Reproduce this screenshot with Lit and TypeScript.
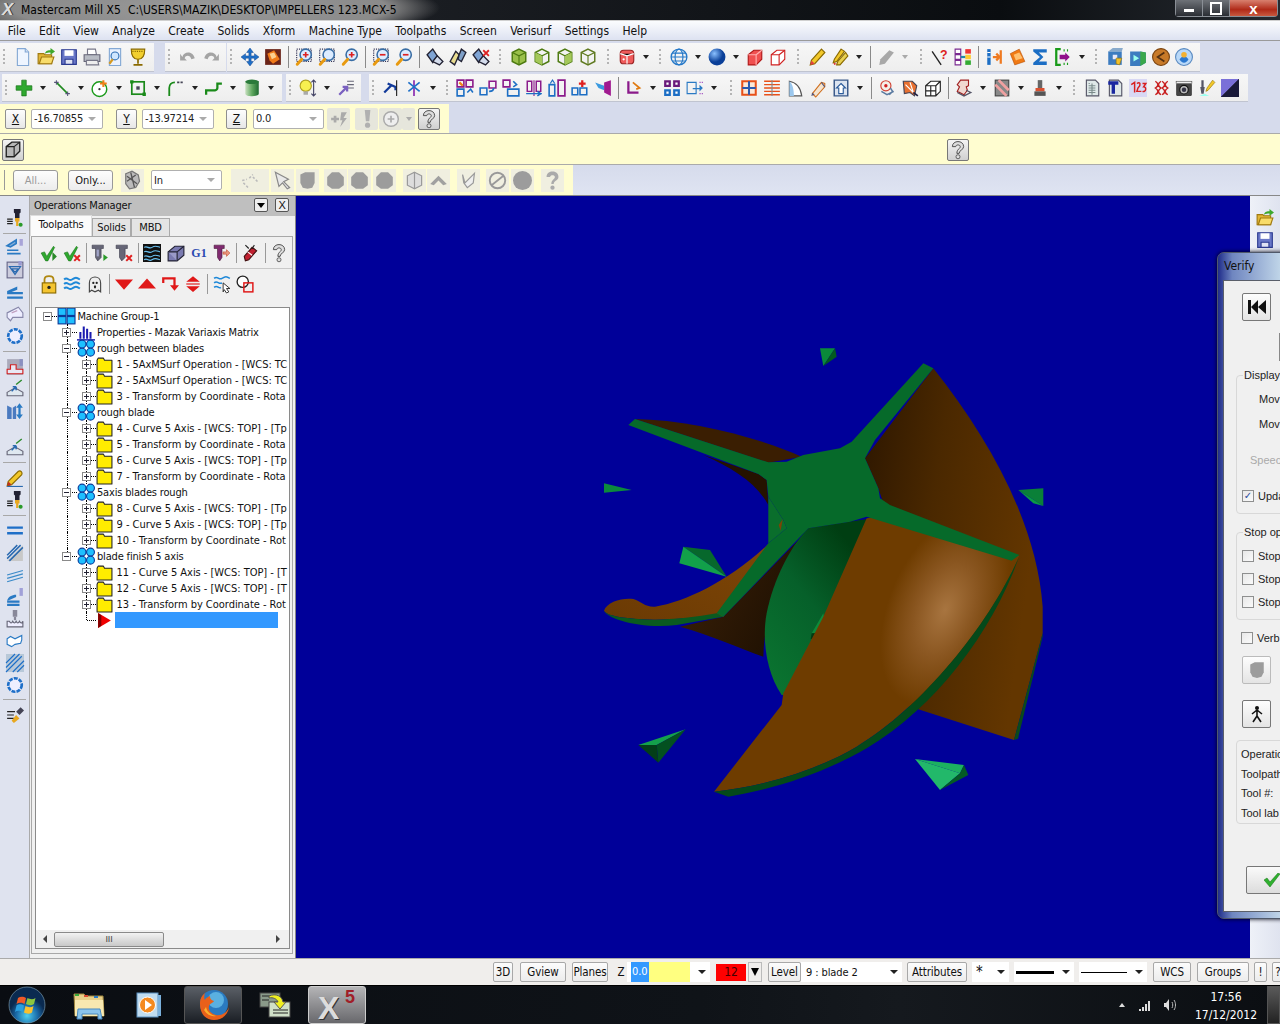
import { LitElement, html, css, svg } from "lit";
import { customElement } from "lit/decorators.js";
import { unsafeSVG } from "lit/directives/unsafe-svg.js";

const mag = (c: string, inner = "") => `<circle cx="9.5" cy="6" r="5" fill="#dcecff" stroke="#3a6ea5" stroke-width="1.4"/>${inner}<path d="M6 10L2 14.5" stroke="#e89a10" stroke-width="2.6" stroke-linecap="round"/>`;
const dotbox = `<rect x="1.5" y="1" width="13" height="11" fill="none" stroke="#335" stroke-dasharray="1 1"/>`;
const cube = (c: string, f = "none") => `<path d="M8 1l6 3v8l-6 3-6-3V4z" fill="${f}" stroke="${c}" stroke-width="1.3"/><path d="M2 4l6 3 6-3M8 7v8" stroke="${c}" fill="none"/>`;
const binoc = (x = "") => `<path d="M1 6l5-5 4 6-4 6z" fill="#7fa4d4" stroke="#223" stroke-width="1.200"/><path d="M6 12l4-5 5 5-3 3z" fill="#d4dcec" stroke="#223" stroke-width="1.200"/>${x}`;
const A: Record<string, string> = {
  new: `<path d="M3 0.5h7l3 3v12H3z" fill="#eef5ff" stroke="#84a8d4"/><path d="M10 .5v3h3" fill="#cfe0f5" stroke="#84a8d4"/>`,
  open: `<path d="M1 5h5l1 1h6v8H1z" fill="#e2b636" stroke="#a07a10"/><path d="M2 14l2-6h11l-2 6z" fill="#f8dc6a" stroke="#a07a10"/><path d="M7 5c1-3 3-3 5-3V0l4 3-4 3V4c-2 0-3 0-5 1z" fill="#3ea82c"/>`,
  save: `<path d="M1.5 1.5h13v13h-13z" fill="#6a78c8" stroke="#2b3a90"/><path d="M4 2h8v5H4z" fill="#fff"/><path d="M4.500 10h7v4.500h-7z" fill="#dfe3f4" stroke="#2b3a90"/>`,
  print: `<path d="M4 1h7l1 5H4z" fill="#fff" stroke="#778"/><path d="M1 6h14v6H1z" fill="#b8bcc4" stroke="#667"/><path d="M3 11h10l1 4H3z" fill="#eee" stroke="#778"/>`,
  prev: `<path d="M3 .5h10v15H3z" fill="#eaf2ff" stroke="#84a8d4"/><circle cx="8" cy="7" r="3.500" fill="#cfe6ff" stroke="#2f6eb5"/><path d="M6 10l-3 4" stroke="#d69a20" stroke-width="2"/>`,
  funnel: `<path d="M2 1h12c0 6-2 9-6 9s-6-3-6-9z" fill="#f2cf2e" stroke="#8a6a00"/><path d="M3 3h10" stroke="#8a6a00" stroke-dasharray="1 1"/><path d="M8 10v4M4 15h8" stroke="#8a6a00" stroke-width="1.500"/>`,
  undo: `<path d="M3 8c1-5 9-6 11 1l-3 1c-1-4-5-4-6-1l2 2H1V5z" fill="#a4a4a4"/>`,
  redo: `<path d="M13 8c-1-5-9-6-11 1l3 1c1-4 5-4 6-1l-2 2h6V5z" fill="#a4a4a4"/>`,
  fit: `<path d="M8 0l3 4H9v3h3V5l4 3-4 3V9H9v3h2l-3 4-3-4h2V9H4v2L0 8l4-3v2h3V4H5z" fill="#1e6fc8" stroke="#0b3f88" stroke-width=".4"/>`,
  orng: `<rect x="1" y="1" width="14" height="14" fill="#6a2418"/><path d="M3 5l6-3 5 8-6 4-3-3z" fill="#f07a18"/><path d="M5 5l4-1 2 4-4 2z" fill="#fcd090"/>`,
  zw: dotbox + mag("", `<path d="M7 6h5M9.500 3.500v5" stroke="#d22" stroke-width="1.500"/>`),
  zt: dotbox + mag(""),
  zp: mag("", `<path d="M7 6h5M9.500 3.500v5" stroke="#d22" stroke-width="1.500"/>`),
  zm: dotbox + mag("", `<path d="M7 6h5" stroke="#d22" stroke-width="1.500"/>`),
  zn: mag("", `<path d="M7 6h5" stroke="#d22" stroke-width="1.500"/>`),
  b1: binoc(), b2: `<path d="M1 12l5-9 3 3-4 9z" fill="#e8dc90" stroke="#223" stroke-width="1.200"/><path d="M9 6l2-5 4 3-4 8-3-2z" fill="#7fa0c8" stroke="#223" stroke-width="1.200"/>`,
  b3: binoc(`<path d="M10 2l5 5M15 2l-5 5" stroke="#d22" stroke-width="1.600"/>`),
  c1: cube("#4d7a10", "#9ac04a"), c2: cube("#4d7a10") + `<path d="M2 4l6 3v8l-6-3z" fill="#a4c85a"/>`,
  c3: cube("#4d7a10") + `<path d="M14 4L8 7v8l6-3z" fill="#a4c85a"/>`, c4: cube("#5f7a20"),
  cr: `<rect x="2" y="2" width="12" height="12" rx="3" fill="#ef5a5a" stroke="#922"/><path d="M8 7v7M2 5l6 2 6-2" stroke="#fff"/><circle cx="5" cy="10" r="1" fill="#fff"/>`,
  globe: `<circle cx="8" cy="8" r="7" fill="none" stroke="#2478c8" stroke-width="1.200"/><ellipse cx="8" cy="8" rx="3.500" ry="7" fill="none" stroke="#2478c8"/><path d="M1 8h14M2 4.500h12M2 11.500h12" stroke="#2478c8"/>`,
  sph: `<defs><radialGradient id="s" cx=".35" cy=".3"><stop offset="0" stop-color="#8ac0ff"/><stop offset="1" stop-color="#0a3f98"/></radialGradient></defs><circle cx="8" cy="8" r="7.500" fill="url(#s)"/>`,
  rb: `<path d="M2 6l5-4h7v8l-5 5H2z" fill="#f05050" stroke="#b01818"/><path d="M2 6h7v9M9 6l5-4" stroke="#ffb0b0" fill="none"/>`,
  rw: `<path d="M2 6l5-4h7v8l-5 5H2z" fill="#fff" stroke="#d02020"/><path d="M2 6h7v9M9 6l5-4" stroke="#d02020" fill="none"/>`,
  pen: `<path d="M12 1l3 3-9 10-4 1 1-4z" fill="#f2c82a" stroke="#8a6a00"/><path d="M2 15l1-4 3 3z" fill="#e04040"/>`,
  pen2: `<path d="M9 1l3 2-7 9-3 1 1-3z" fill="#f2c82a" stroke="#8a6a00"/><path d="M13 4l2 3-7 8-3 0 1-3z" fill="#e8d050" stroke="#8a6a00"/><path d="M2 13l1 2 2-1z" fill="#d22"/>`,
  pg: `<path d="M11 2l4 2-8 10-5 1 1-5z" fill="#a8a8a8"/>`,
  q: `<path d="M1 3l8 12" stroke="#222" stroke-width="1.200"/><text x="8" y="10" font-size="11" font-weight="700" fill="#d22" font-family="Liberation Sans">?</text>`,
  st: `<path d="M1 1h5v4H1zM1 6h5v4H1zM1 11h5v4H1z" fill="#fff" stroke="#7a2a90"/><path d="M10 1h5v4h-5z" fill="#e33"/><path d="M10 6h5v4h-5z" fill="#fc3"/><path d="M10 11h5v4h-5z" fill="#3a3"/><path d="M6 8h4" stroke="#28a" stroke-width="2"/>`,
  bo: `<path d="M2 1h3v14H2z" fill="#1c6ec4"/><path d="M5 4h-3M5 8h-3" stroke="#fff"/><path d="M7 8h5M10 5l3 3-3 3" stroke="#ef7a20" stroke-width="2" fill="none"/><path d="M14 2v12" stroke="#ef7a20" stroke-width="2"/>`,
  ham: `<path d="M2 5l8-4 5 11-9 3z" fill="#f07a14" stroke="#b04a00" stroke-width=".5"/><path d="M5 6l5-2 3 5-6 2z" fill="#ffc070"/>`,
  sig: `<path d="M14 1H2v2l6 5-6 5v2h12v-3H7l4-4-4-4h7z" fill="#1c6ec4"/>`,
  pj: `<path d="M6 1H2v14h4" fill="none" stroke="#1a9a1a" stroke-width="2"/><path d="M9 1v2M12 1v2M9 13v2M12 13v2" stroke="#1a9a1a"/><path d="M5 6h5V4l4 4-4 4v-2H5z" fill="#90108a"/>`,
  v1: `<rect x="2" y="3" width="12" height="12" fill="#3c7cc0"/><path d="M2 3l4-3h9l-1 3z" fill="#8ac"/><path d="M6 6h4v4H6z" fill="#e8e8f8"/><path d="M9 9l5 0-2 6-3-1z" fill="#f2c02a" stroke="#8a6a00" stroke-width=".5"/>`,
  v2: `<path d="M1 3h9l5 1v9l-5 3H1z" fill="#3c7cc0"/><path d="M10 3l5 1v9l-5 3z" fill="#3aa84a"/><path d="M4 6l5 3-5 3z" fill="#9fe"/>`,
  v3: `<circle cx="8" cy="8" r="7.500" fill="#c87a28" stroke="#7a4410"/><path d="M11 4L5 8l6 4" stroke="#543010" stroke-width="1.500" fill="none"/>`,
  v4: `<circle cx="8" cy="8" r="7.500" fill="#b8d8f8" stroke="#5a8ac0"/><path d="M4 10c2 4 6 4 8 0l-2-2H6z" fill="#2a78d0"/><circle cx="8" cy="6" r="2.500" fill="#f2b030"/>`,
  plus: `<path d="M6 1h4v5h5v4h-5v5H6v-5H1V6h5z" fill="#2fa82f" stroke="#147014" stroke-width=".6"/>`,
  ln: `<path d="M3 3l10 10" stroke="#208a20" stroke-width="1.400"/><path d="M1 3h4M3 1v4M11 13h4M13 11v4" stroke="#557" stroke-width=".9"/>`,
  circ: `<circle cx="7.500" cy="9" r="6.500" fill="#fff" stroke="#1a9a1a" stroke-width="1.300"/><path d="M11 1v6M8 4h6" stroke="#f08018" stroke-width="1.800"/><circle cx="7.500" cy="9" r="1" fill="#333"/>`,
  rc: `<rect x="2.500" y="2.500" width="11" height="11" fill="none" stroke="#1a8a1a" stroke-width="1.500"/><path d="M1 1h3v3H1zM12 12h3v3h-3z" fill="#1a8a1a"/><rect x="6.500" y="6.500" width="3" height="3" fill="#445"/>`,
  fil: `<path d="M2 15V8c0-3 2-5 5-5" fill="none" stroke="#1a8a1a" stroke-width="1.600"/><path d="M9 3h6M3 15v0" stroke="#445" stroke-width="1.500" stroke-dasharray="2 1"/>`,
  chn: `<path d="M1 14V10h8c1 0 2-1 2-2V4h4" fill="none" stroke="#1a8a1a" stroke-width="2"/>`,
  cyl: `<defs><linearGradient id="cy"><stop offset="0" stop-color="#c8e0c0"/><stop offset=".5" stop-color="#60a860"/><stop offset="1" stop-color="#1e6a30"/></linearGradient></defs><path d="M2 2h12v11c0 3-12 3-12 0z" fill="url(#cy)"/><ellipse cx="8" cy="2.500" rx="6" ry="2" fill="#2a7a3a"/>`,
  bulb: `<circle cx="6" cy="6" r="5" fill="#f8f050" stroke="#b0a020"/><path d="M4 11h4v3H4z" fill="#aaa"/><path d="M13 1v14M11 3l2-2 2 2M11 13l2 2 2-2" stroke="#446" fill="none"/>`,
  xfa: `<path d="M9 2h6M9 5h6M9 8h6" stroke="#667" /><path d="M2 14l7-7M5 7h4v4" stroke="#7a60c0" stroke-width="2" fill="none"/>`,
  m1: `<path d="M2 12L8 6M5 4l7 3v3" stroke="#123a9a" stroke-width="2" fill="none"/><path d="M13 1v14" stroke="#222"/>`,
  m2: `<path d="M8 1v14" stroke="#8a2ab0" stroke-width="1.500"/><path d="M3 3l10 8M13 3L3 11" stroke="#1e6fc8" stroke-width="1.500"/>`,
  x1: `<path d="M1 1h6v6H1z" fill="none" stroke="#8a1a8a" stroke-width="1.400"/><path d="M9 1h6v6H9z" fill="none" stroke="#8a1a8a" stroke-width="1.400"/><path d="M1 9h6v6H1z" fill="none" stroke="#1c6ec4" stroke-width="1.400"/><path d="M10 12l3-3 2 3" stroke="#1c6ec4" stroke-width="1.400" fill="none"/><path d="M3 3l3 3" stroke="#f08018" stroke-width="2"/>`,
  x2: `<path d="M1 8h6v6H1z" fill="none" stroke="#1c6ec4" stroke-width="1.400"/><path d="M9 2h6v6H9z" fill="none" stroke="#8a1a8a" stroke-width="1.400"/><path d="M9 11c2 0 4-1 4-3" stroke="#1c6ec4" stroke-width="1.500" fill="none"/>`,
  x3: `<path d="M1 1h6v6H1z" fill="none" stroke="#8a1a8a" stroke-width="1.400"/><path d="M5 9h10v6H5z" fill="none" stroke="#1c6ec4" stroke-width="1.400"/><path d="M10 2l3 3-3 2" stroke="#1c6ec4" stroke-width="1.400" fill="none"/>`,
  x4: `<path d="M8 1v14" stroke="#8a1a8a"/><path d="M2 2h4v9H2zM10 2h4v9h-4z" fill="none" stroke="#8a1a8a" stroke-width="1.300"/><path d="M1 13h14M11 11l3 2-3 2" stroke="#1c6ec4" stroke-width="1.300" fill="none"/>`,
  x5: `<path d="M1 5h5v10H1z" fill="none" stroke="#1c6ec4" stroke-width="1.400"/><path d="M9 1h6v14H9z" fill="none" stroke="#8a1a8a" stroke-width="1.500"/><path d="M2 4l2-3 2 3" stroke="#1c6ec4" fill="none"/>`,
  x6: `<path d="M1 8h5v6H1zM8 8h6v6H8z" fill="none" stroke="#1c6ec4" stroke-width="1.400"/><path d="M10 1v6M7 4h6" stroke="#e02020" stroke-width="2"/>`,
  x7: `<path d="M1 3l8 3v4L4 8z" fill="#3a9ae0"/><path d="M9 3l6-2v14l-6-3z" fill="#a01a90"/>`,
  x8: `<path d="M3 2v10h9" fill="none" stroke="#8a1a8a" stroke-width="2"/><path d="M7 3l6 5-3 1" stroke="#e07a10" stroke-width="1.500" fill="none"/>`,
  x9: `<path d="M1 1h6v6H1zM9 1h6v6H9z" fill="#6a1a7a"/><path d="M1 9h6v6H1zM9 9h6v6H9z" fill="#1c6ec4"/><path d="M3 3h2v2H3zM11 3h2v2h-2zM3 11h2v2H3zM11 11h2v2h-2z" fill="#fff"/>`,
  x10: `<path d="M1 3h8v10H1z" fill="none" stroke="#2a7ac4"/><path d="M6 8h6V5l3 3-3 3V9H6z" fill="#2a7ac4"/><path d="M12 3h3M12 13h3" stroke="#a04ac0" stroke-dasharray="1 1"/>`,
  g1: `<path d="M2 2h12v12H2z" fill="#fbe8d8" stroke="#e85018" stroke-width="1.800"/><path d="M8 2v12M2 8h12" stroke="#2a5ab0" stroke-width="1.800"/>`,
  g2: `<path d="M1 2h14M1 5h14M1 8h14M1 11h14M1 14h14" stroke="#e85018" stroke-width="1.300"/><path d="M8 1v14" stroke="#888"/>`,
  g3: `<path d="M3 15V2c6 1 10 6 11 13z" fill="#fff" stroke="#555"/><path d="M3 15V2c3 2 4 8 4 13z" fill="#9cc8ee"/>`,
  g4: `<path d="M3 13L11 3l3 1 0 3-8 9z" fill="#f4e4d0" stroke="#d07020"/><path d="M11 3l3 4" stroke="#557"/><path d="M2 15l3-1-2-2z" fill="#557"/>`,
  g5: `<path d="M2 1h12v14H2z" fill="#dce4f0" stroke="#3a5a8a" stroke-width="1.300"/><path d="M8 4l4 4h-2v5H6V8H4z" fill="#fff" stroke="#2a5a9a"/>`,
  h1: `<circle cx="7" cy="6" r="4.500" fill="#f4f0e8" stroke="#d04030"/><circle cx="7" cy="6" r="1.500" fill="#d02020"/><path d="M3 11l5 3 6-3M11 8l2 3-3 3" stroke="#5a7aa0" fill="none" stroke-width="1.300"/>`,
  h2: `<path d="M2 2h8l4 4-2 9-4-3-5 1z" fill="#e87030" stroke="#445"/><path d="M4 5l7 7M8 3l3 9" stroke="#fff"/><path d="M11 12l4 3" stroke="#224" stroke-width="1.500"/>`,
  h3: `<path d="M1.500 6L6 2h8.500v9l-4 4h-9zM1.500 6h9v9M10.500 6l4-4M6 6v9M1.500 10.500h9" fill="#fff" stroke="#222"/>`,
  i1: `<path d="M5 1h7v5l-2 1 1 3-3 4-6-3 2-4-2-2z" fill="#f0d8d0" stroke="#a02020"/><path d="M2 12l6 3 6-3-4-2" stroke="#556" fill="none" stroke-width="1.200"/>`,
  i2: `<rect x="2" y="1" width="12" height="14" fill="#888" stroke="#444"/><path d="M2 5l10 10M5 1l9 9" stroke="#f0a0a0" stroke-width="2.500"/>`,
  i3: `<path d="M6 1h4v7H6z" fill="#666"/><path d="M4 8h8v3H4z" fill="#d85030"/><path d="M3 11h10v4H3z" fill="#555"/>`,
  j1: `<path d="M3 1h8l3 3v11H3z" fill="#dfe8e8" stroke="#556"/><path d="M5 4h1M5 6h6M5 8h6M5 10h6M5 12h6M8 4v10" stroke="#7a8a8a"/>`,
  j2: `<path d="M3 1h8l3 3v11H3z" fill="#dfe8e8" stroke="#556"/><path d="M2 2h9v3H8v8H5V5H2z" fill="#1a28a0"/>`,
  j3: `<rect width="16" height="16" fill="#d8d8f4"/><path d="M2 5l3-2v9M7 4c3-2 4 1 1 4l-1 3h4M12 4h3l-2 3c3 0 2 5-1 4" fill="none" stroke="#d82020" stroke-width="1.300"/>`,
  j4: `<path d="M3 2c3 2 3 4 0 6 3 2 3 4 0 6M8 2c-3 2-3 4 0 6-3 2-3 4 0 6M9 2c3 2 3 4 0 6 3 2 3 4 0 6M14 2c-3 2-3 4 0 6-3 2-3 4 0 6" stroke="#c82020" fill="none" stroke-width="1.300"/>`,
  j5: `<rect x="1" y="4" width="14" height="11" fill="#444" rx="1"/><rect x="1" y="2" width="14" height="2" fill="#eee" stroke="#444" stroke-width=".5"/><circle cx="8" cy="9.500" r="3.800" fill="#bbb" stroke="#111"/><circle cx="8" cy="9.500" r="2" fill="#334"/>`,
  j6: `<path d="M3 1h2v6H3zM2 7h4l-1 6H3z" fill="#556"/><path d="M13 1l2 2-6 7-2 1 1-3z" fill="#f2c82a" stroke="#8a6a00" stroke-width=".5"/><path d="M1 15l5-2 4 2z" fill="#9fe"/>`,
  j7: `<rect width="16" height="16" fill="#222"/><path d="M0 16L16 0H0z" fill="#7a70d8"/><path d="M0 16L16 0v16z" fill="#1a1a3a"/>`,
  d1: `<path d="M1 8l4-1M7 6l3-3M2 10l4 4M10 5l4 4" stroke="#bbb" stroke-width="1.300" stroke-dasharray="2 1.500"/>`,
  d2: `<path d="M6 0h5l-1 10H7z" fill="#b0b0b0"/><circle cx="8.500" cy="13.500" r="2.300" fill="#b0b0b0"/>`,
  d3: `<circle cx="8" cy="8" r="6.500" fill="#eee" stroke="#aaa" stroke-width="1.300"/><path d="M5 8h6M8 5v6" stroke="#aaa" stroke-width="1.500"/>`,
  d4: `<path d="M1 8h7M4.500 5v6" stroke="#aaa" stroke-width="2.400"/><path d="M10 2l5 0-3 5h3l-6 8 2-6H9z" fill="#aaa"/>`,
  ds: `<path d="M2 1l11 6-4 2 5 5-2 1-4-5-3 3z" fill="#e8e8e8" stroke="#888"/>`,
  dh: `<path d="M2 3l4-2 8 0v9l-2 4-4 1-4-1-2-4z" fill="#9c9c9c"/>`,
  dh2: `<path d="M5 1h6l4 4v7l-4 3H5l-4-3V5z" fill="#9c9c9c"/>`,
  dp: `<path d="M8 1l6 3v8l-6 3-6-3V4z" fill="#ddd" stroke="#999"/><path d="M8 1v14" stroke="#999"/>`,
  du: `<path d="M1 11l7-7 7 7-3 1-4-4-4 4z" fill="#a0a0a0"/>`,
  dv: `<path d="M3 3l2 7 8-8-1 8-5 4-3-4z" fill="#eee" stroke="#999"/>`,
  dn: `<circle cx="8" cy="8" r="6.500" fill="none" stroke="#999" stroke-width="1.600"/><path d="M3 12L13 4" stroke="#999" stroke-width="1.600"/>`,
  dc: `<circle cx="8" cy="8" r="8" fill="#9c9c9c"/>`,
  dq: `<path d="M3 5c0-6 10-6 10 0 0 3-4 3-4 6H7c0-4 3-4 3-6 0-2-4-2-4 0z" fill="#aaa"/><circle cx="8" cy="14" r="1.800" fill="#aaa"/>`,
  dbug: `<path d="M3 3l5-2 5 3 1 5-3 5-5 1-3-4z" fill="#bbb" stroke="#777"/><path d="M4 5l8 6M4 9l7-5M7 2l3 12" stroke="#555"/>`,
  hlp: `<path d="M3 5c0-6 10-6 10 0 0 3-4 3-4 6H7c0-4 3-4 3-6 0-2-4-2-4 0z" fill="#ddd" stroke="#444" stroke-width=".8"/><circle cx="8" cy="14" r="1.800" fill="#ddd" stroke="#444" stroke-width=".7"/>`,
  cubeb: `<path d="M2 5l5-4h7v8l-5 5H2z" fill="#b8b8b8" stroke="#222" stroke-width="1.200"/><path d="M2 5h7v9M9 5l5-4" stroke="#222" fill="none"/>`,
  l1: `<path d="M7 0h6v3l-1 1v4h-4V4L7 3z" fill="#223"/><path d="M8 8h4v3H8zM9 11h2v4H9z" fill="#e8a820"/><circle cx="13" cy="14" r="1.800" fill="#2a9a2a"/><path d="M1 9h5M1 11h5M1 13h5" stroke="#222"/>`,
  l2: `<path d="M1 6L9 1v3L4 7zM1 10h10M1 13h12" stroke="#2a7ac4" stroke-width="1.500" fill="#8ab0d8"/><path d="M12 0h3v6h-3z" fill="#a8a4d8"/>`,
  l3: `<rect x="1" y="1" width="14" height="14" fill="#ccd" stroke="#668"/><path d="M3 5h10L8 12zM5 7h6L8 10z" fill="none" stroke="#2a6ab0"/><path d="M11 0h3v4h-3z" fill="#9a9ad0"/>`,
  l4: `<path d="M1 7l9-4v3L5 8h10v2H1zM1 12h14v2H1z" fill="#2a7ac4"/>`,
  l5: `<path d="M1 7L11 2l4 5v4H6l-2 3-3-3z" fill="#eef" stroke="#88a"/><path d="M5 7l5-2" stroke="#c0a0c0"/>`,
  l6: `<circle cx="8" cy="8" r="6" fill="#eef" stroke="#1e6fc8" stroke-width="2.400" stroke-dasharray="3.500 1"/>`,
  l7: `<rect x="1" y="1" width="14" height="14" fill="#aab" /><path d="M1 14h14v-4H9V6H4v4H1z" fill="#e8e8f4" stroke="#d02020"/><path d="M12 1l3 0v6h-3z" fill="#8a90c0"/>`,
  l8: `<path d="M1 11l7-4 7 4v3H1z" fill="#dfe8f0" stroke="#667"/><path d="M5 10l4-4M9 6l-3 0M9 6v3" stroke="#2a6ab0" stroke-width="1.400" fill="none"/><path d="M9 4l5-4" stroke="#2a8a2a" stroke-width="1.300"/>`,
  l9: `<path d="M1 15V3l4 2v10zM6 15V5l3-2 0 12z" fill="#4a7ac0"/><path d="M12 1l3 4h-2v6h2l-3 4-3-4h2V5H9z" fill="#2a7ac4"/>`,
  l10: `<path d="M2 11L11 2c2-1 4 1 3 3l-9 9-4 1z" fill="#f2c82a" stroke="#8a6a00"/><path d="M1 15.500h14" stroke="#2a6ab0"/><path d="M1 15l1-4 3 3z" fill="#c03020"/>`,
  l11: `<path d="M1 5h14M1 10h14" stroke="#1e6fc8" stroke-width="2.200"/>`,
  l12: `<path d="M1 15L15 1v14z" fill="#c8c8c8"/><path d="M1 10L10 1M1 13L13 1M3 15L15 3" stroke="#2a6ab0" stroke-width="1.300"/>`,
  l13: `<path d="M1 7l14-3v3L1 10zM1 12l14-3v2L1 14z" fill="#d8e0f0"/><path d="M1 8l14-4M1 11l14-4M1 14l14-4" stroke="#3a8ac8"/>`,
  l14: `<path d="M1 11c1-3 4-5 8-5l0 2-7 3z" fill="#2a7ac4"/><path d="M1 11h11v2H1zM1 14h11v2H1z" fill="#2a7ac4"/><path d="M12 0h3v7h-3z" fill="#a0a0d8"/>`,
  l15: `<path d="M1 10v5h14v-5c-1 2-2 2-3 0-1 2-2 2-3 0-1 2-2 2-3 0-1 2-2 2-3 0z" fill="#eef" stroke="#667"/><path d="M6 0h4v6H6z" fill="#889"/><path d="M7 6h2v3H7z" fill="#889"/>`,
  l16: `<path d="M1 6l3-2 4 2 6-3v4l-1 3-5 1-3 2-4-2z" fill="#fff" stroke="#2a7ac4"/>`,
  l17: `<rect width="16" height="16" fill="#b8c8d8"/><path d="M0 8l8-8M0 12L12 0M0 16L14 2M6 16L16 6M10 16l6-6" stroke="#1e6fc8"/>`,
  l18: `<path d="M1 5h7M1 8h6M1 11h6" stroke="#222"/><path d="M9 5l4-4 3 3-4 4z" fill="#445"/><path d="M9 8l3 3-5 4-2-2z" fill="#e8a820"/>`,
  p1: `<path d="M1 8l3-1 2 4 6-9 1 1-6 12H5z" fill="#2fa82f" stroke="#147014" stroke-width=".5"/><path d="M11 7l4 4-4 4z" fill="#2a8a2a"/>`,
  p2: `<path d="M1 8l3-1 2 4 6-9 1 1-6 12H5z" fill="#2fa82f" stroke="#147014" stroke-width=".5"/><path d="M10 10l5 5M15 10l-5 5" stroke="#e02020" stroke-width="1.800"/>`,
  p3: `<path d="M1 1h10v3H9v8l-3 3-2-3V4H1z" fill="#667" stroke="#334" stroke-width=".5"/><path d="M5 5h2v6H5z" fill="#a0a4c8"/><path d="M11 9l4 3-4 3z" fill="#2a9a2a"/>`,
  p4: `<path d="M1 1h10v3H9v8l-3 3-2-3V4H1z" fill="#667" stroke="#334" stroke-width=".5"/><path d="M10 10l5 5M15 10l-5 5" stroke="#e02020" stroke-width="1.800"/>`,
  p5: `<rect x="0" y="0" width="16" height="16" fill="#111"/><path d="M1 3c3-2 4 2 7 0s4-1 7 0M1 7c3-2 4 2 7 0s4-1 7 0M1 11c3-2 4 2 7 0s4-1 7 0M1 14c3-2 4 2 7 0s4-1 7 0" stroke="#6ac0f0" fill="none"/>`,
  p6: `<path d="M1 7l6-5h8v8l-6 5H1z" fill="#7a7ab0" stroke="#223"/><path d="M1 7h8v8M9 7l6-5" stroke="#223" fill="#9a9ac8"/>`,
  p8: `<path d="M1 1h9v3H8v8l-2 3-2-3V4H1z" fill="#802a70" stroke="#401030" stroke-width=".5"/><path d="M9 7h3V5l3 3-3 3V9H9z" fill="#e89880" stroke="#c04020" stroke-width=".5"/>`,
  p9: `<path d="M2 11l7-8 4 3-7 8-3 1z" fill="#c02030" stroke="#401010"/><path d="M5 7l4 3" stroke="#fff"/><path d="M3 1l3 3M11 1l-2 3" stroke="#222"/>`,
  p10: `<path d="M3 5c0-6 10-6 10 0 0 3-4 3-4 6H7c0-4 3-4 3-6 0-2-4-2-4 0z" fill="#ddd" stroke="#444" stroke-width=".8"/><circle cx="8" cy="14" r="1.800" fill="#ddd" stroke="#444" stroke-width=".7"/>`,
  lock: `<path d="M4 8V4c0-4 8-4 8 0v4" fill="none" stroke="#b08810" stroke-width="1.600"/><rect x="2" y="7" width="12" height="9" fill="#f4c430" stroke="#8a6a00"/><circle cx="8" cy="11" r="1.500" fill="#222"/>`,
  wav: `<path d="M1 4c3-3 4 2 7 0s4-2 7 0M1 8c3-3 4 2 7 0s4-2 7 0M1 12c3-3 4 2 7 0s4-2 7 0" stroke="#1e88d8" stroke-width="1.700" fill="none"/>`,
  gho: `<path d="M3 15V7c0-7 10-7 10 0v8l-2-1.500L8 15l-3-1.500z" fill="#eee" stroke="#444"/><circle cx="6.500" cy="7" r="1" fill="#222"/><circle cx="9.500" cy="7" r="1" fill="#222"/><ellipse cx="8" cy="10.500" rx="1" ry="1.500" fill="#222"/>`,
  dn2: `<path d="M0 4h16l-8 9z" fill="#e01818"/>`,
  up2: `<path d="M0 12h16L8 3z" fill="#e01818"/>`,
  rt: `<path d="M1 2h12v7h3l-4 5-4-5h3V4H3v3H1z" fill="#e01818"/>`,
  ud: `<path d="M2 6l6-5 6 5zM2 10l6 5 6-5z" fill="#e01818"/><path d="M2 8h12" stroke="#e01818"/>`,
  wc: `<path d="M1 3c3-3 4 2 7 0s4-2 7 0M1 7c3-3 4 2 7 0M1 11c3-3 4 2 6 0" stroke="#1e88d8" stroke-width="1.300" fill="none"/><path d="M9 7l6 5-3 0 2 3-2 1-2-3-1 2z" fill="#fff" stroke="#222" stroke-width=".8"/>`,
  sb: `<circle cx="6" cy="6" r="5" fill="#fff" stroke="#222" stroke-width="1.200"/><rect x="7" y="7" width="8" height="8" fill="none" stroke="#e01818" stroke-width="1.300"/>`,
  bars: `<path d="M3 14V8M6 14V3M9 14V5M12 14V8" stroke="#1a1ab0" stroke-width="1.800"/><path d="M0 15h16" stroke="#1a1ab0" stroke-width="1.300"/>`,
  grp: `<rect x="1" y="1" width="7" height="6.500" fill="#1ec0ff" stroke="#0a3a9a"/><rect x="9" y="1" width="7" height="6.500" fill="#1ec0ff" stroke="#0a3a9a"/><rect x="1" y="8.500" width="7" height="6.500" fill="#1ec0ff" stroke="#0a3a9a"/><rect x="9" y="8.500" width="7" height="6.500" fill="#1ec0ff" stroke="#0a3a9a"/>`,
  blo: `<g fill="#1ec0ff" stroke="#0a3a9a"><circle cx="4.500" cy="4.500" r="3.500"/><circle cx="12" cy="4.500" r="3.500"/><circle cx="4.500" cy="11.700" r="3.500"/><circle cx="12" cy="11.700" r="3.500"/></g>`,
  fold: `<path d="M1 4l1-2h5l1 2h7v11H1z" fill="#ffec00" stroke="#222" stroke-linejoin="round"/>`,
  flag: `<path d="M2 1l12 7-12 7z" fill="#f00000"/><path d="M2 1v14l3-2V3z" fill="#800000"/>`,
};
const ic = (n: string, s = 18) => html`<svg class="i" width=${s} height=${s} viewBox="0 0 16 16">${unsafeSVG(A[n] ?? "")}</svg>`;

type It = string;
const ROW1: [number, number, It[]][] = [
  [154, 11, ["new", "open", "save", "print", "prev", "funnel"]],
  [61, 1, ["undo", "redo"]],
  [269, 0, ["fit", "orng", "|", "zw", "zt", "zp", "|", "zm", "zn", "|", "b1", "b2", "b3"]],
  [108, 0, ["c1", "c2", "c3", "c4"]],
  [52, 0, ["cr>"]],
  [138, 0, ["globe>", "sph>", "rb", "rw"]],
  [123, 0, ["pen", "pen2>", "|", "pg>"]],
  [175, 0, ["q", "st", "|", "bo", "ham", "sig", "pj>"]],
  [108, 0, ["v1", "v2", "v3", "v4"]],
];
const ROW2: [number, number, It[]][] = [
  [280, 4, ["plus>", "ln>", "circ>", "rc>", "fil>", "chn>", "cyl>"]],
  [75, 8, ["bulb>", "xfa"]],
  [74, 0, ["m1", "m2>"]],
  [284, 0, ["x1", "x2", "x3", "x4", "x5", "x6", "x7", "|", "x8>", "x9", "x10>"]],
  [343, 0, ["g1", "g2", "g3", "g4", "g5>", "|", "h1", "h2", "h3", "|", "i1>", "i2>", "i3>"]],
  [178, 0, ["j1", "j2", "j3", "j4", "j5", "j6", "j7"]],
];
const LEFT = ["l1","-","l2","l3","l4","l5","l6","-","l7","l8","l9","--","l8","-","l10","l1","-","l11","l12","l13","l14","l15","l16","l17","l6","-","l18"];
const P1 = ["p1","p2","|","p3","p4","|","p5","p6","G1","p8","|","p9","|","p10"];
const P2 = ["lock","wav","gho","|","dn2","up2","rt","ud","|","wc","sb"];
// [icon, centre x, width] of the disabled selection tools in the yellow filter row
const DIS: [string, number, number][] = [["d1",250,38],["ds",282,23],["dh",307,23],["dh2",335,23],["dh2",359,23],["dh2",384,23],["dp",414,23],["du",438,23],["dv",468,23],["dn",497,23],["dc",522,23],["dq",552,23]];

type Row = { l: number; t: string; k: string; open?: boolean; v1?: boolean; end?: boolean; flag?: boolean };
const ops = (arr: string[], v1: boolean): Row[] => arr.map((t) => ({ l: 2, t, k: "fold", v1 }));
const TREE: Row[] = [
  { l: 0, t: "Machine Group-1", k: "grp", open: true },
  { l: 1, t: "Properties - Mazak Variaxis Matrix", k: "bars" },
  { l: 1, t: "rough between blades", k: "blo", open: true },
  ...ops(["1 - 5AxMSurf Operation - [WCS: TC", "2 - 5AxMSurf Operation - [WCS: TC", "3 - Transform by Coordinate - Rota"], true),
  { l: 1, t: "rough blade", k: "blo", open: true },
  ...ops(["4 - Curve 5 Axis - [WCS: TOP] - [Tp", "5 - Transform by Coordinate - Rota", "6 - Curve 5 Axis - [WCS: TOP] - [Tp", "7 - Transform by Coordinate - Rota"], true),
  { l: 1, t: "5axis blades rough", k: "blo", open: true },
  ...ops(["8 - Curve 5 Axis - [WCS: TOP] - [Tp", "9 - Curve 5 Axis - [WCS: TOP] - [Tp", "10 - Transform by Coordinate - Rot"], true),
  { l: 1, t: "blade finish 5 axis", k: "blo", open: true, end: true },
  ...ops(["11 - Curve 5 Axis - [WCS: TOP] - [T", "12 - Curve 5 Axis - [WCS: TOP] - [T", "13 - Transform by Coordinate - Rot"], false),
  { l: 2, t: "", k: "flag", flag: true },
];

@customElement("app-root")
export class AppRoot extends LitElement {
  static styles = css`
    :host { display: block; width: 1280px; height: 1024px; overflow: hidden; position: relative; font-family: "DejaVu Sans Condensed", "DejaVu Sans", sans-serif; font-size: 11px; color: #111; background: #d6dbec; }
    * { box-sizing: border-box; }
    .i { display: block; flex: none; overflow: visible; }
    .root { display: flex; flex-direction: column; height: 1024px; }
    .title { height: 21px; flex: none; border-bottom: 1px solid #d0d0d0; background: radial-gradient(ellipse 240px 34px at 200px 8px, #9a9a9a 0, #8a8a8a 78%, rgba(90,90,90,0) 100%), linear-gradient(90deg, #555 0, #1a1d22 420px, #0a0d10 1000px, #262a30 1280px); display: flex; align-items: center; padding-left: 21px; position: relative; color: #000; font-size: 12px; letter-spacing: .05px; white-space: pre; }
    .xlogo { position: absolute; left: 2px; top: 0; font: italic 700 17px "Liberation Sans", sans-serif; color: #ddd; text-shadow: 1px 0 #333; }
    .ctl { margin-left: auto; margin-right: 2px; align-self: flex-start; display: flex; height: 17px; border: 1px solid #8a8f96; border-top: 0; border-radius: 0 0 4px 4px; width: 103px; }
    .ctl b { flex: none; width: 27px; display: flex; align-items: center; justify-content: center; color: #fff; font: 700 15px "Liberation Sans", sans-serif; background: linear-gradient(#6e7278, #2a2d33); border-right: 1px solid #8a8f96; }
    .ctl b.min::before { content: ""; width: 10px; height: 3px; background: #fff; margin-top: 5px; }
    .ctl b.rst::before { content: ""; width: 8px; height: 9px; border: 2px solid #fff; }
    .ctl b.cls { flex: 1; background: linear-gradient(#d8806e, #b02a18 60%, #c85a40); border-right: 0; }
    .menu { height: 20px; flex: none; background: linear-gradient(#fbfcfe, #dde2f1); border-bottom: 1px solid #9a9a9a; display: flex; align-items: center; padding-left: 1px; font-size: 12px; }
    .menu span { padding: 0 6.7px; }
    .bars { flex: none; height: 63px; padding-top: 2px; background: #d6dbec; display: flex; flex-direction: column; gap: 2px; }
    .tb { display: flex; height: 29px; }
    .tb.r2 { padding-left: 1.5px; height: 28px; }
    .g { flex: none; height: 100%; display: flex; align-items: center; padding-left: 11px; background: linear-gradient(#f7f7f7, #eeeeee); position: relative; border-bottom: 1px solid #c0c4d0; }
    .g::before { content: ""; position: absolute; left: 3px; top: 6px; height: 15px; border-left: 2px dotted #b4b4b4; }
    .slot { flex: none; width: 23px; display: flex; justify-content: center; align-items: center; }
    .dd { flex: none; width: 15px; display: flex; justify-content: center; }
    .dd::before { content: ""; border: 3.5px solid transparent; border-top: 4px solid #222; border-bottom: 0; }
    .dd.dis::before { border-top-color: #aaa; }
    .sep { flex: none; width: 8px; display: flex; justify-content: center; }
    .sep::before { content: ""; width: 1px; height: 22px; background: #8a8a8a; }
    .coord { flex: none; height: 30px; display: flex; background: #d6dbec; border-bottom: 1px solid #aaa; }
    .cy { width: 449px; height: 29px; background: #fffdd0; display: flex; align-items: center; padding-left: 5px; }
    .btn { flex: none; height: 20px; display: flex; align-items: center; justify-content: center; border: 1px solid #8f8f8f; border-radius: 2px; background: linear-gradient(#fdfdfd, #e7e7e7); }
    .btn u { text-decoration: underline; font-size: 12px; }
    .w20 { width: 21px; }
    .sel { flex: none; height: 20px; display: flex; align-items: center; border: 1px solid #b0b0b0; border-radius: 2px; background: #fff; padding-left: 2px; font-size: 11px; letter-spacing: -.2px; color: #222; }
    .sel span:first-child { flex: 1; }
    .sel::after { content: ""; margin-right: 6px; border: 4px solid transparent; border-top: 4px solid #aaa; border-bottom: 0; }
    .w72 { width: 72px; }
    .w71 { width: 71px; }
    .ml5 { margin-left: 5px; }
    .ml6 { margin-left: 6px; }
    .ml13 { margin-left: 13px; }
    .ml12 { margin-left: 12px; }
    .dis-b { flex: none; width: 23px; height: 22px; display: flex; align-items: center; justify-content: center; background: #e6e6dc; border-radius: 2px; }
    .dis-b.a { margin-left: 3px; }
    .dis-b.b { margin-left: 5px; }
    .dis-b.c { margin-left: 1px; }
    .dis-b.d { width: 13px; margin-left: 0; }
    .dis-b + .hb { margin-left: 3px; }
    .hb { flex: none; width: 22px; height: 22px; display: flex; align-items: center; justify-content: center; border: 1px solid #777; border-radius: 2px; background: linear-gradient(#f4f4f4, #d0d0d0); }
    .msg { flex: none; height: 31px; background: #fffdd0; border-bottom: 1px solid #aaa; display: flex; align-items: center; padding: 1px 0 0 2px; }
    .msg .hb:last-child { margin-left: 923px; }
    .filt { flex: none; height: 31px; display: flex; background: linear-gradient(#d6dbec, #dfe4f2); border-bottom: 1px solid #888; }
    .fy { width: 573px; height: 30px; background: #fffdd0; display: flex; align-items: center; padding-left: 4px; }
    .fy::before { content: ""; height: 20px; border-left: 1px solid #999; margin-right: 8px; }
    .tbtn { flex: none; width: 45px; height: 21px; display: flex; align-items: center; justify-content: center; border: 1px solid #999; border-radius: 3px; background: linear-gradient(#fdfdfd, #ececec); font-size: 11px; }
    .tbtn + .tbtn { margin-left: 10px; }
    .mute { color: #999; }
    .fico { flex: none; height: 23px; display: flex; align-items: center; justify-content: center; background: #f0efe0; }
    .fbug { width: 23px; margin: 0 7.5px; }
    .main { flex: none; height: 762px; display: flex; position: relative; }
    .left { flex: none; width: 30px; background: #dfe3ef; border-right: 1px solid #aaa; display: flex; flex-direction: column; align-items: center; padding-top: 11px; }
    .lslot { flex: none; height: 22px; display: flex; align-items: center; }
    .lsep { flex: none; height: 8.400px; width: 100%; display: flex; align-items: center; padding: 0 3px; }
    .lsep::before { content: ""; flex: 1; height: 1px; background: #a8a8a8; }
    .lsp2 { flex: none; height: 15px; }
    .panel { flex: none; width: 266px; background: #f0f0f0; display: flex; flex-direction: column; border-right: 1px solid #888; letter-spacing: -.17px; }
    .ph { flex: none; height: 20px; background: #bfbfbf; display: flex; align-items: center; padding: 0 0 2px 4px; font-size: 11px; letter-spacing: -.2px; }
    .ph .pb { flex: none; width: 14px; height: 14px; border: 1px solid #555; border-radius: 2px; background: #eee; display: flex; align-items: center; justify-content: center; font: 11px "Liberation Sans", sans-serif; }
    .ph .pb.d { margin-left: auto; margin-right: 7px; }
    .ph .pb.c { margin-right: 6px; }
    .ph .pb.d::before { content: ""; border: 4px solid transparent; border-top: 5px solid #000; border-bottom: 0; }
    .tabs { flex: none; height: 20px; display: flex; align-items: flex-end; background: #f0f0f0; position: relative; }
    .tab { flex: none; height: 18px; padding: 0; width: 39px; border: 1px solid #aaa; border-bottom: 0; background: #e4e4e4; display: flex; align-items: center; justify-content: center; }
    .tab.on { height: 21px; width: 62px; background: #fbfbfb; border-color: #ddd; padding-bottom: 3px; }
    .pbody { flex: 1; min-height: 0; background: #f0f0f0; margin: 0 2px 4px 1px; border: 1px solid #a8a8a8; display: flex; flex-direction: column; }
    .ptb { flex: none; height: 31px; display: flex; align-items: center; padding-left: 5px; }
    .ptb + .ptb { border-top: 1px solid #c8c8c8; }
    .ptb .pslot { flex: none; width: 23.400px; display: flex; justify-content: center; }
    .ptb .psep { flex: none; width: 5px; display: flex; justify-content: center; }
    .ptb .psep::before { content: ""; width: 1px; height: 20px; background: #999; }
    .ptb.b .psep { width: 6px; }
    .ptb.b .pslot { width: 23px; }
    .g1 { font: 700 12px "Liberation Serif", serif; letter-spacing: 0; color: #2a4ab0; line-height: 18px; }
    .treebox { flex: 1; min-height: 0; margin: 8px 0 4px 3px; width: 255px; border: 1px solid #8a8a8a; background: #fff; display: flex; flex-direction: column; }
    .tree { flex: 1; min-height: 0; overflow: hidden; padding-left: 1.500px; }
    .row { display: flex; height: 16px; align-items: center; white-space: nowrap; }
    .cell { flex: none; width: 19.500px; height: 16px; position: relative; }
    .cell.v::before, .cell.h::before { content: ""; position: absolute; left: 9.500px; top: 0; bottom: 0; border-left: 1px dotted #000; }
    .cell.h::before { bottom: 8px; }
    .cell.t::after { content: ""; position: absolute; left: 10px; right: 0; top: 8px; border-top: 1px dotted #000; }
    .box { position: absolute; z-index: 1; left: 5px; top: 3.500px; width: 9px; height: 9px; border: 1px solid #8a8a8a; background: #fff; }
    .box::before { content: ""; position: absolute; left: 1px; right: 1px; top: 3px; height: 1px; background: #223; }
    .box.p::after { content: ""; position: absolute; top: 1px; bottom: 1px; left: 3px; width: 1px; background: #223; }
    .ticon { flex: none; width: 20.500px; display: flex; align-items: center; }
    .label { flex: none; }
    .cut { width: 171px; overflow: hidden; letter-spacing: -.03px; }
    .selbar { flex: none; width: 163px; height: 16px; background: #3399ff; margin-left: -1.500px; }
    .hscroll { flex: none; height: 18px; background: #f0f0f0; display: flex; align-items: center; padding: 0 2px 0 7px; }
    .arr { flex: none; border: 4px solid transparent; }
    .arr.l { border-right: 4px solid #444; border-left: 0; }
    .arr.r { border-left: 4px solid #444; border-right: 0; margin-left: auto; margin-right: 7px; }
    .thumb { flex: none; margin-left: 7px; width: 110px; height: 15px; border: 1px solid #8a8a8a; border-radius: 2px; background: linear-gradient(#f2f2f2, #c9c9c9); display: flex; justify-content: center; align-items: center; color: #444; font: 9px "Liberation Sans", sans-serif; }
    .canvas { flex: 1; min-width: 0; background: #000099; position: relative; }
    .canvas svg { display: block; }
    .right { flex: none; width: 30px; background: linear-gradient(90deg, #eef1f8, #dfe3ef); display: flex; flex-direction: column; align-items: center; padding-top: 13px; gap: 4px; }
    .verify { position: absolute; left: 1217px; top: 56px; width: 240px; height: 667px; border: 1px solid #50596a; border-radius: 7px 0 0 7px; background: linear-gradient(90deg, #1f2c8a 0, #6f86c0 6%, #cfe4f0 30%, #e6f0f6 100%); padding: 27px 0 6px 5px; box-shadow: 0 0 4px #001; }
    .vt { position: absolute; left: 6px; top: 6px; font-size: 12px; color: #111; }
    .vbody { height: 100%; background: #f0f0f0; border: 1px solid #5a5f6a; position: relative; display: flex; flex-direction: column; padding: 12px 0 0 18px; font-family: "Liberation Sans", sans-serif; font-size: 11px; color: #222; white-space: nowrap; }
    .vb { flex: none; width: 29px; height: 28px; border: 1px solid #777; border-radius: 2px; background: linear-gradient(#fdfdfd, #e4e4e4); display: flex; align-items: center; justify-content: center; }
    .vb.dis { border-color: #bbb; }
    .vedge { flex: none; width: 2px; height: 28px; background: #888; margin: 12px 0 0 37px; }
    .vg { flex: none; border: 1px solid #d8d8d8; border-radius: 4px; position: relative; margin-left: -6px; width: 220px; padding-left: 5px; }
    .vg > i { position: absolute; left: 6px; top: -7px; background: #f0f0f0; font-style: normal; padding: 0 1px; }
    .vg1 { height: 139px; margin-top: 14px; display: flex; flex-direction: column; }
    .vg2 { height: 88px; margin-top: 18px; display: flex; flex-direction: column; padding-top: 16px; gap: 10px; }
    .vl { flex: none; height: 13px; display: flex; align-items: center; gap: 4px; }
    .mv { flex: none; margin: 17px 0 0 17px; }
    .mv2 { flex: none; margin: 13px 0 0 17px; }
    .mv3 { flex: none; margin: 24px 0 0 8px; color: #aaa; }
    .mvc { margin: 23px 0 0 0; }
    .ck { flex: none; width: 12px; height: 12px; border: 1px solid #8e8f8f; background: linear-gradient(135deg, #e8e8e8, #fafafa); display: flex; align-items: center; justify-content: center; }
    .ck.on::before { content: "✓"; font: 700 10px "DejaVu Sans", sans-serif; color: #2a4a9a; }
    .verb { flex: none; margin: 11px 0 0 -1px; }
    .vb.m1 { margin-top: 12px; }
    .vb.m2 { margin-top: 16px; }
    .vinfo { flex: none; height: 84px; margin-top: 12px; display: flex; flex-direction: column; padding-left: 4px; padding-top: 7px; gap: 6.500px; }
    .vinfo span { height: 13px; display: block; }
    .ok { flex: none; margin: 42px 0 0 4px; width: 120px; height: 28px; border: 1px solid #777; border-radius: 2px; background: linear-gradient(#fafafa, #dcdcdc); padding-left: 17px; display: flex; align-items: center; }
    .status { flex: none; height: 27px; background: #f0eeec; border-top: 1px solid #aaa; display: flex; align-items: center; padding-left: 493px; letter-spacing: -.1px; }
    .sb { flex: none; height: 20px; display: flex; align-items: center; justify-content: center; border: 1px solid #a8a8a8; border-radius: 2px; background: linear-gradient(#fcfcfc, #ececec); font-size: 11.500px; }
    .s3d { width: 20px; }
    .sgv { width: 46px; margin-left: 7px; }
    .spl { width: 36px; margin-left: 6px; }
    .szl { width: 12px; margin-left: 7px; border: 0; background: none; }
    .slv { width: 33px; margin-left: 6px; }
    .sat { width: 60px; margin-left: 5px; }
    .swc { width: 38px; margin-left: 6px; }
    .sgr { width: 52px; margin-left: 6px; }
    .sx { width: 13px; margin-left: 5px; }
    .sq { width: 12px; margin-left: 5px; }
    .sd { flex: none; height: 20px; background: #fff; display: flex; align-items: center; position: relative; }
    .sd::after { content: ""; position: absolute; right: 4px; top: 8px; border: 4px solid transparent; border-top: 4px solid #222; border-bottom: 0; }
    .zy { width: 83px; padding-left: 4px; }
    .zy span { background: linear-gradient(90deg, #3399ff 18px, #ffff80 18px); width: 59px; height: 100%; display: block; line-height: 20px; color: #fff; padding-left: 1px; }
    .sd-lv { width: 101px; padding-left: 5px; }
    .sd-pt { width: 37px; margin-left: 5px; padding-left: 4px; font-size: 15px; }
    .sd-l1 { width: 60px; margin-left: 5px; padding-left: 2px; }
    .sd-l2 { width: 68px; margin-left: 5px; padding-left: 2px; }
    .red { flex: none; width: 30px; height: 17px; margin-left: 6px; background: #f00; color: #400; display: flex; align-items: center; justify-content: center; font-size: 12px; }
    .tri { flex: none; margin-left: 2px; width: 14px; height: 20px; border: 1px solid #bbb; display: flex; justify-content: center; align-items: center; }
    .tri::before { content: ""; border: 4px solid transparent; border-top: 8px solid #000; border-bottom: 0; }
    .line { height: 3px; background: #000; width: 38px; }
    .lthin { height: 1px; background: #000; width: 46px; }
    .task { flex: 1; background: linear-gradient(90deg, #0a0d12 0, #0f1318 700px, #15191e 900px, #0b0e12 1280px); border-top: 1px solid #000; display: flex; align-items: center; color: #eee; }
    .orb { flex: none; width: 38px; height: 38px; margin-left: 8px; }
    .tk { flex: none; width: 58px; height: 38px; margin-left: 4px; display: flex; align-items: center; justify-content: center; border-radius: 3px; }
    .tk.t1 { margin-left: 14px; }
    .tk.t2 { margin-left: 2px; }
    .tk.act { margin-left: 6px; background: linear-gradient(#5a5f66, #1a1e24); border: 1px solid #555; }
    .tk.act2 { background: linear-gradient(#b4b4b6, #68686c); border: 1px solid #ccc; }
    .x5 { position: relative; width: 34px; height: 34px; display: block; }
    .x5 b { position: absolute; left: -2px; top: 2px; font: 700 32px "Liberation Sans", sans-serif; color: #dcdcdc; text-shadow: 1px 1px #333; }
    .x5 em { position: absolute; right: -1px; top: -1px; font: normal 700 18px "Liberation Sans", sans-serif; color: #a01e28; }
    .tray { margin-left: auto; display: flex; align-items: center; height: 100%; }
    .up { flex: none; border: 3px solid transparent; border-bottom: 4px solid #ddd; border-top: 0; }
    .sig { flex: none; margin-left: 14px; }
    .spk { flex: none; margin-left: 10px; }
    .clock { flex: none; width: 70px; margin-left: 12px; padding-top: 1px; text-align: center; font-size: 12px; line-height: 18px; color: #fff; }
    .show { flex: none; width: 13px; height: 100%; margin-left: 6px; border: 1px solid #555; background: linear-gradient(#5a5a5a, #222); }
  `;

  slots(items: It[]) {
    return items.map((it) => {
      if (it === "|") return html`<span class="sep"></span>`;
      const dd = it.endsWith(">");
      const n = dd ? it.slice(0, -1) : it;
      return html`<span class="slot">${ic(n)}</span>${dd ? html`<span class="dd ${n === "pg" ? "dis" : ""}"></span>` : ""}`;
    });
  }
  row(r: [number, number, It[]][], cl = "") {
    return html`<div class="tb ${cl}">${r.map(([w, m, items]) => html`<div class="g" style="width:${w}px;margin-right:${m}px">${this.slots(items)}</div>`)}</div>`;
  }
  disabled() {
    let prev = 222;
    return DIS.map(([n, c, w]) => {
      const ml = c - w / 2 - prev;
      prev = c + w / 2;
      return html`<span class="fico" style="width:${w}px;margin-left:${ml}px">${ic(n, 19)}</span>`;
    });
  }
  treeRow(r: Row, i: number, all: Row[]) {
    const box = (open?: boolean) => html`<span class="box ${open ? "" : "p"}"></span>`;
    const last = i === all.length - 1;
    let cells;
    if (r.l === 0) cells = html`<span class="cell t">${box(true)}</span>`;
    else if (r.l === 1) cells = html`<span class="cell"></span><span class="cell ${r.end ? "h" : "v"} t">${box(r.open)}</span>`;
    else cells = html`<span class="cell"></span><span class="cell ${r.v1 ? "v" : ""}"></span><span class="cell ${last ? "h" : "v"} t">${last ? "" : box(false)}</span>`;
    return html`<div class="row">${cells}<span class="ticon">${ic(r.k, r.k === "fold" || r.k === "flag" ? 17 : 18)}</span>${r.flag ? html`<span class="selbar"></span>` : html`<span class="label ${r.l === 2 ? "cut" : ""}">${r.t}</span>`}</div>`;
  }
  impeller() {
    return svg`<svg width="954" height="762" viewBox="296 196 954 762">
      <defs>
        <linearGradient id="bk" x1="0" y1="0" x2="1" y2="0.3"><stop offset="0" stop-color="#2c1600"/><stop offset=".45" stop-color="#4a2800"/><stop offset="1" stop-color="#633600"/></linearGradient>
        <linearGradient id="dk" x1="0" y1="0" x2="1" y2="0.5"><stop offset="0" stop-color="#3e2208"/><stop offset="1" stop-color="#1e1002"/></linearGradient>
        <linearGradient id="hub" x1=".15" y1="1" x2=".8" y2=".15"><stop offset="0" stop-color="#0a7430"/><stop offset=".55" stop-color="#06602a"/><stop offset="1" stop-color="#003e12"/></linearGradient>
        <linearGradient id="ll" x1="0" y1="1" x2="1" y2="0"><stop offset="0" stop-color="#6a3a04"/><stop offset="1" stop-color="#804606"/></linearGradient>
        <radialGradient id="hl" gradientUnits="userSpaceOnUse" cx="0" cy="0" r="1" gradientTransform="translate(1065 810) rotate(22) scale(170 300)"><stop offset="0" stop-color="#a87540"/><stop offset=".5" stop-color="#8a5620"/><stop offset="1" stop-color="#6e3c00"/></radialGradient>
      </defs>
      <g transform="translate(590 340) scale(.33333)">
        <path d="M1030 85C1200 300 1340 550 1358 800L1358 880L1272 1200L945 1095L1285 650L880 490L865 445L825 355Z" fill="url(#bk)"/>
        <path d="M1358 880L1272 1200L1284 1196L1358 890Z" fill="#0a4a1c"/>
        <path d="M135 237C300 240 500 290 635 350L535 368Z" fill="#3a1e02"/>
        <path d="M340 345C430 385 500 430 535 495L530 420L505 402Z" fill="#251200"/>
        <path d="M270 860C360 885 450 925 520 950C525 800 590 660 660 565L400 830Z" fill="url(#dk)"/>
        <path d="M42 812C50 785 100 772 130 777C155 785 165 802 195 800C290 785 420 720 535 612L400 830L378 825C300 835 200 845 120 835C80 830 50 825 42 812Z" fill="url(#ll)"/>
        <path d="M42 812C50 835 150 868 260 855L400 830L380 820C300 835 200 845 120 835C80 830 50 825 42 812Z" fill="#0a5a20"/>
        <path d="M655 565L845 535L800 650L720 820L600 1065L575 1065C530 1000 515 900 530 820C550 720 600 620 655 565Z" fill="url(#hub)"/>
        <path d="M665 880L710 875L700 820Z" fill="#0e8a3a"/><path d="M665 880L710 878L662 898Z" fill="#023a12"/>
        <path d="M830 535L860 530L1288 648C1200 850 1000 1100 800 1220C680 1290 540 1335 372 1355L575 1095L580 1060L700 830Z" fill="url(#hl)"/>
        <path d="M1288 648C1200 850 1000 1100 800 1220C680 1290 540 1335 372 1355L415 1370C560 1345 700 1300 830 1225C1040 1100 1210 870 1288 648Z" fill="#04491a"/>
        <path d="M535 470L580 540L590 565L535 610Z" fill="#0a6e2c"/><path d="M566 555L578 538L572 572Z" fill="#7a4406"/>
        <path d="M115 255L135 237L535 367L590 365L640 345L750 325L785 305L1000 70L1030 85L855 300L825 355L865 445L870 475L900 495L1288 645L1265 662L830 530L780 545L655 565L400 830L380 820L535 610L590 565L580 540L535 470L530 420L505 402Z" fill="#066a2a"/>
        <path d="M690 25L735 25L700 78Z" fill="#0a8a3a"/><path d="M735 25L740 50L700 78Z" fill="#035a20"/>
        <path d="M42 430L125 450L42 458Z" fill="#0c8a3c"/>
        <path d="M1285 450L1360 445L1360 498Z" fill="#0a8038"/><path d="M1285 450L1360 498L1330 490Z" fill="#0c9a44"/>
        <path d="M280 620L360 630L410 710Z" fill="#07682c"/><path d="M280 620L410 710L268 670Z" fill="#12a04a"/>
        <path d="M145 1215L287 1168L200 1215Z" fill="#14a04c"/><path d="M287 1168L205 1268L200 1215Z" fill="#035020"/><path d="M145 1215L200 1215L205 1268Z" fill="#033e18"/>
        <path d="M975 1257L1122 1275L1110 1300Z" fill="#1cb060"/><path d="M975 1257L1110 1300L1050 1350Z" fill="#22b86a"/><path d="M1122 1275L1135 1305L1050 1350L1110 1300Z" fill="#035a24"/>
      </g>
    </svg>`;
  }
  render() {
    const pi = (n: string) => n === "|" ? html`<span class="psep"></span>` : n === "G1" ? html`<span class="pslot g1">G1</span>` : html`<span class="pslot">${ic(n)}</span>`;
    return html`<div class="root">
      <div class="title"><span class="xlogo">X</span><span>Mastercam Mill X5  C:\\USERS\\MAZIK\\DESKTOP\\IMPELLERS 123.MCX-5</span>
        <span class="ctl"><b class="min"></b><b class="rst"></b><b class="cls">x</b></span></div>
      <div class="menu">${["File","Edit","View","Analyze","Create","Solids","Xform","Machine Type","Toolpaths","Screen","Verisurf","Settings","Help"].map((m) => html`<span>${m}</span>`)}</div>
      <div class="bars">${this.row(ROW1)}${this.row(ROW2, "r2")}</div>
      <div class="coord"><div class="cy">
        <span class="btn w20"><u>X</u></span><span class="sel w72 ml5"><span>-16.70855</span></span>
        <span class="btn w20 ml13"><u>Y</u></span><span class="sel w72 ml5"><span>-13.97214</span></span>
        <span class="btn w20 ml12"><u>Z</u></span><span class="sel w71 ml6"><span>0.0</span></span>
        <span class="dis-b a">${ic("d4")}</span><span class="dis-b b">${ic("d2")}</span><span class="dis-b c">${ic("d3")}</span><span class="dis-b d"><span class="dd dis"></span></span><span class="hb">${ic("hlp")}</span>
      </div></div>
      <div class="msg"><span class="hb">${ic("cubeb")}</span><span class="hb">${ic("hlp")}</span></div>
      <div class="filt"><div class="fy">
        <span class="tbtn mute">All...</span><span class="tbtn">Only...</span>
        <span class="fico fbug">${ic("dbug", 20)}</span>
        <span class="sel w71"><span>In</span></span>
        ${this.disabled()}
      </div></div>
      <div class="main">
        <div class="left">${LEFT.map((n) => n === "-" ? html`<span class="lsep"></span>` : n === "--" ? html`<span class="lsp2"></span>` : html`<span class="lslot">${ic(n)}</span>`)}</div>
        <div class="panel">
          <div class="ph"><span>Operations Manager</span><span class="pb d"></span><span class="pb c">X</span></div>
          <div class="tabs"><span class="tab on">Toolpaths</span><span class="tab">Solids</span><span class="tab">MBD</span></div>
          <div class="pbody">
            <div class="ptb">${P1.map(pi)}</div>
            <div class="ptb b">${P2.map(pi)}</div>
            <div class="treebox">
              <div class="tree">${TREE.map((r, i, a) => this.treeRow(r, i, a))}</div>
              <div class="hscroll"><span class="arr l"></span><span class="thumb">III</span><span class="arr r"></span></div>
            </div>
          </div>
        </div>
        <div class="canvas">${this.impeller()}</div>
        <div class="right">${ic("open")}${ic("save")}</div>
        <div class="verify">
          <span class="vt">Verify</span>
          <div class="vbody">
            <span class="vb">${svgFF()}</span>
            <span class="vedge"></span>
            <div class="vg vg1"><i>Display</i>
              <span class="mv">Mov</span><span class="mv2">Mov</span><span class="mv3">Speec</span>
              <span class="vl mvc"><span class="ck on"></span>Upda</span>
            </div>
            <div class="vg vg2"><i>Stop op</i>
              <span class="vl"><span class="ck"></span>Stop</span><span class="vl"><span class="ck"></span>Stop</span><span class="vl"><span class="ck"></span>Stop</span>
            </div>
            <span class="vl verb"><span class="ck"></span>Verb</span>
            <span class="vb dis m1">${ic("dh")}</span>
            <span class="vb m2">${walker()}</span>
            <div class="vg vinfo"><span>Operatic</span><span>Toolpath</span><span>Tool #:</span><span>Tool lab</span></div>
            <span class="ok">${check()}</span>
          </div>
        </div>
      </div>
      <div class="status">
        <span class="sb s3d">3D</span><span class="sb sgv">Gview</span><span class="sb spl">Planes</span>
        <span class="sb szl">Z</span>
        <span class="sd zy"><span>0.0</span></span>
        <span class="red">12</span><span class="tri"></span>
        <span class="sb slv">Level</span>
        <span class="sd sd-lv">9 : blade 2</span>
        <span class="sb sat">Attributes</span>
        <span class="sd sd-pt">*</span>
        <span class="sd sd-l1"><span class="line"></span></span>
        <span class="sd sd-l2"><span class="lthin"></span></span>
        <span class="sb swc">WCS</span>
        <span class="sb sgr">Groups</span>
        <span class="sb sx">!</span>
        <span class="sb sq">?</span>
      </div>
      <div class="task">
        <svg class="orb" viewBox="0 0 38 38"><defs><radialGradient id="o" cx=".5" cy=".8"><stop offset="0" stop-color="#4fd0f0"/><stop offset=".6" stop-color="#1a6aa8"/><stop offset="1" stop-color="#0a2a50"/></radialGradient></defs><circle cx="19" cy="19" r="18" fill="url(#o)" stroke="#8ab" stroke-width=".6"/><path d="M10 12c3-2 6-1 8 0l-1.500 6c-2-1-5-2-8 0z" fill="#f05a28"/><path d="M19.500 12c2 1 5 2 8 0l-1.500 6c-3 2-6 1-8 0z" fill="#8cc63f"/><path d="M8.500 19.500c3-2 5-1 7.500 0L14.500 26c-2-1-5-2-7.500 0z" fill="#2aa0e0"/><path d="M17.500 20c2 1 5 2 8 0L24 26.500c-3 2-6 1-8 0z" fill="#fbc02d"/></svg>
        <span class="tk t1">${tkFolder()}</span>
        <span class="tk t2">${tkWmp()}</span>
        <span class="tk act">${tkFox()}</span>
        <span class="tk">${tkSwitch()}</span>
        <span class="tk act2"><span class="x5"><b>X</b><em>5</em></span></span>
        <span class="tray">
          <span class="up"></span>
          <svg class="sig" width="14" height="12" viewBox="0 0 14 12"><path d="M0 10h2v2H0zM3 8h2v4H3zM6 5h2v7H6zM9 2h2v10H9z" fill="#ddd"/></svg>
          <svg class="spk" width="16" height="14" viewBox="0 0 16 14"><path d="M1 5h2l3-4v12l-3-4H1z" fill="#ddd"/><path d="M9 4c1 2 1 4 0 6M11 2c2 3 2 7 0 10" stroke="#bbb" fill="none"/></svg>
          <span class="clock">17:56<br />17/12/2012</span>
          <span class="show"></span>
        </span>
      </div>
    </div>`;
  }
}
const svgFF = () => html`<svg width="18" height="14" viewBox="0 0 18 14"><path d="M0 0h3v14H0zM3 7l7-7v14zM10 7l8-7v14z" fill="#111"/></svg>`;
const walker = () => html`<svg width="16" height="18" viewBox="0 0 16 18"><circle cx="8" cy="3" r="2" fill="#111"/><path d="M8 5L3 9M8 5l5 4M8 5v6M8 11l-4 6M8 11l4 6" stroke="#111" stroke-width="1.600" fill="none"/></svg>`;
const check = () => html`<svg width="16" height="14" viewBox="0 0 16 14"><path d="M0 7l3-2 3 4 8-9 2 1-10 13z" fill="#2fb02f" stroke="#147014" stroke-width=".5"/></svg>`;
const tkFolder = () => html`<svg width="34" height="30" viewBox="0 0 34 30"><path d="M2 4h10l2 2h17l1 20H3z" fill="#e8cf88" stroke="#a08840"/><path d="M3 4h4v2H3z" fill="#3aa83a"/><path d="M12 5h4v2h-4z" fill="#d84a30"/><path d="M22 6h4v2h-4z" fill="#2a7ac4"/><path d="M3 10h28l1 16H3z" fill="#f8e8b0"/><path d="M6 19h22l2 10h-4v-5H10v5H5z" fill="#8ac4ec" stroke="#4a8ac0"/></svg>`;
const tkWmp = () => html`<svg width="28" height="28" viewBox="0 0 28 28"><rect x="2" y="2" width="21" height="24" fill="#c0dcf0" stroke="#5a90c0"/><rect x="23" y="4" width="3" height="21" fill="#7ab0dc"/><circle cx="12.500" cy="14" r="8" fill="#f58a20" stroke="#fff"/><path d="M10 9l7 5-7 5z" fill="#fff"/></svg>`;
const tkFox = () => html`<svg width="34" height="34" viewBox="0 0 34 34"><circle cx="18" cy="16" r="14" fill="#2a7ac0"/><circle cx="20" cy="12" r="8" fill="#5ab0e0"/><path d="M4 16c0 10 6 16 14 16 8 0 14-5 15-13-2 6-8 9-13 8-5-1-8-5-7-9 1-3 4-3 5-5-3-1-4-2-4-5-3 1-5 3-5 4C8 11 8 7 9 5 5 8 4 12 4 16z" fill="#e8601a"/><path d="M8 22c3 5 8 7 12 6-5-1-9-4-10-9z" fill="#fbb02a"/></svg>`;
const tkSwitch = () => html`<svg width="32" height="28" viewBox="0 0 32 28"><rect x="1" y="2" width="20" height="14" fill="#8a9a8a" stroke="#444"/><rect x="10" y="11" width="21" height="15" fill="#d0e0c8" stroke="#444"/><path d="M3 5h16M3 9h7M14 19h15M14 22h15" stroke="#222"/><path d="M10 5c7-3 13 0 14 6h3l-6 7-6-7h4c-1-3-5-5-9-4z" fill="#f0f020" stroke="#555"/></svg>`;
